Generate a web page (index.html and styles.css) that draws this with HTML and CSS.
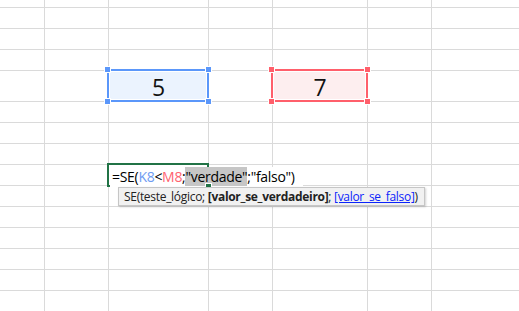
FILE: index.html
```html
<!DOCTYPE html>
<html lang="pt">
<head>
<meta charset="utf-8">
<title>SE</title>
<link rel="stylesheet" href="styles.css">
</head>
<body>
<div class="sheet">
  <!-- row 1 -->
  <div></div><div></div><div></div><div></div><div></div><div></div><div></div>
  <!-- row 2 -->
  <div></div><div></div><div></div><div></div><div></div><div></div><div></div>
  <!-- row 3 -->
  <div></div><div></div><div></div><div></div><div></div><div></div><div></div>
  <!-- row 4 -->
  <div></div><div></div><div></div><div></div><div></div><div></div><div></div>
  <!-- row 5 -->
  <div></div><div></div>
  <div class="cell val sel-blue"><span>5</span><i class="box"><b class="h tl"></b><b class="h tr"></b><b class="h bl"></b><b class="h br"></b></i></div>
  <div></div>
  <div class="cell val sel-red"><span>7</span><i class="box"><b class="h tl"></b><b class="h tr"></b><b class="h bl"></b><b class="h br"></b></i></div>
  <div></div><div></div>
  <!-- row 6 -->
  <div></div><div></div><div></div><div></div><div></div><div></div><div></div>
  <!-- row 7 -->
  <div></div><div></div><div></div><div></div><div></div><div></div><div></div>
  <!-- row 8 -->
  <div></div><div></div><div></div><div></div><div></div><div></div><div></div>
  <!-- row 9 -->
  <div></div><div></div>
  <div class="cell edit">
    <i class="ebox"></i>
    <span class="formula">=SE(<span class="ref-k">K8</span>&lt;<span class="ref-m">M8</span>;<span class="hl">"verdade"</span>;"falso")</span>
    <b class="eh"></b>
    <div class="tip">SE(teste_lógico; <strong>[valor_se_verdadeiro]</strong>; <a class="arg">[valor_se_falso]</a>)</div>
  </div>
  <div></div><div></div><div></div><div></div>
  <!-- row 10 -->
  <div></div><div></div><div></div><div></div><div></div><div></div><div></div>
  <!-- row 11 -->
  <div></div><div></div><div></div><div></div><div></div><div></div><div></div>
  <!-- row 12 -->
  <div></div><div></div><div></div><div></div><div></div><div></div><div></div>
  <!-- row 13 -->
  <div></div><div></div><div></div><div></div><div></div><div></div><div></div>
  <!-- row 14 -->
  <div></div><div></div><div></div><div></div><div></div><div></div><div></div>
  <!-- row 15 -->
  <div></div><div></div><div></div><div></div><div></div><div></div><div></div>
</div>
</body>
</html>
```

FILE: styles.css
```css
html, body {
  margin: 0;
  padding: 0;
  background: #fff;
  overflow: hidden;
}
body {
  width: 519px;
  height: 311px;
  font-family: "Open Sans", "Noto Sans", sans-serif;
}
.sheet {
  display: grid;
  grid-template-columns: 44px 63px 99px 63px 94px 63px 1fr;
  grid-template-rows: 7px 20px 20px 20px 30px 20px 20px 20px 20px 20px 20px 20px 20px 20px 20px;
  gap: 1px;
  background: #dadada;
  width: 519px;
  height: 320px;
}
.sheet > div {
  background: #fff;
}
.cell {
  position: relative;
}
.val {
  display: flex;
  align-items: center;
  justify-content: center;
  font-size: 23px;
  color: #111;
}
.val span {
  position: relative;
  top: 1px;
}
.sel-blue { background: #ebf3fe !important; }
.sel-red { background: #fdeeef !important; }
.box {
  position: absolute;
  left: -2px;
  right: -1px;
  top: -2px;
  bottom: -1px;
  border: 2px solid;
  box-shadow: inset 0 0 0 1px #fff;
}
.sel-blue .box { border-color: #5b97fa; }
.sel-red .box { border-color: #ff5f6b; }
.h {
  position: absolute;
  width: 5px;
  height: 5px;
  border: 1px solid #fff;
}
.sel-blue .h { background: #5b97fa; }
.sel-red .h { background: #ff5f6b; }
.h.tl { left: -5px; top: -5px; }
.h.tr { right: -5px; top: -5px; }
.h.bl { left: -5px; bottom: -5px; }
.h.br { right: -5px; bottom: -5px; }

.edit {
  z-index: 2;
}
.ebox {
  position: absolute;
  left: -2px;
  right: -1px;
  top: -2px;
  bottom: -2px;
  border: 2px solid #217346;
}
.formula {
  position: relative;
  display: inline-block;
  white-space: nowrap;
  background: #fff;
  margin-left: 1px;
  padding: 0 8px 0 2px;
  height: 20px;
  line-height: 20px;
  font-size: 14px;
  letter-spacing: -0.3px;
  color: #000;
}
.ref-k { color: #6e9cf2; }
.ref-m { color: #ff6470; }
.hl { background: #c6c6c6; }
.eh {
  position: absolute;
  right: -4px;
  bottom: -5px;
  width: 5px;
  height: 5px;
  background: #217346;
  border: 1px solid #fff;
}
.tip {
  position: absolute;
  left: 9px;
  top: 22px;
  white-space: nowrap;
  background: #f1f1f1;
  border: 1px solid #c6c6c6;
  box-shadow: 1px 1px 2px rgba(0,0,0,0.18);
  padding: 0 6px 0 5px;
  height: 17px;
  line-height: 17px;
  font-size: 12px;
  letter-spacing: -0.3px;
  color: #222;
}
.tip strong { font-weight: 700; }
.arg {
  color: #0b24fb;
  text-decoration: underline;
}
```
